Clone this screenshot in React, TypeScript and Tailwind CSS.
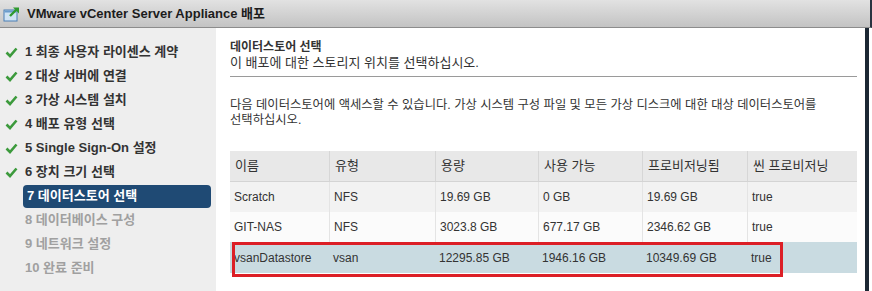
const STEPS = [
  { n: 1, label: "최종 사용자 라이센스 계약", state: "done" },
  { n: 2, label: "대상 서버에 연결", state: "done" },
  { n: 3, label: "가상 시스템 설치", state: "done" },
  { n: 4, label: "배포 유형 선택", state: "done" },
  { n: 5, label: "Single Sign-On 설정", state: "done" },
  { n: 6, label: "장치 크기 선택", state: "done" },
  { n: 7, label: "데이터스토어 선택", state: "current" },
  { n: 8, label: "데이터베이스 구성", state: "todo" },
  { n: 9, label: "네트워크 설정", state: "todo" },
  { n: 10, label: "완료 준비", state: "todo" },
];

const COLUMNS = ["이름", "유형", "용량", "사용 가능", "프로비저닝됨", "씬 프로비저닝"];

const ROWS = [
  ["Scratch", "NFS", "19.69 GB", "0 GB", "19.69 GB", "true"],
  ["GIT-NAS", "NFS", "3023.8 GB", "677.17 GB", "2346.62 GB", "true"],
  ["vsanDatastore", "vsan", "12295.85 GB", "1946.16 GB", "10349.69 GB", "true"],
];

const GRID = "grid grid-cols-[99px_106px_103px_104px_105px_1fr]";

function AppIcon() {
  return (
    <svg width="18" height="16" viewBox="0 0 18 16">
      <rect x="1" y="4" width="13" height="11" fill="#cfe3f4" stroke="#4a7fb5" strokeWidth="1" />
      <rect x="1.5" y="4.5" width="12" height="2" fill="#6a9ccc" />
      <path d="M7 10 L14 3" stroke="#2f9a2f" strokeWidth="2.4" />
      <path d="M10 1.5 H16 V7.5 Z" fill="#2f9a2f" />
    </svg>
  );
}

function Check() {
  return (
    <svg width="13" height="11" viewBox="0 0 13 11">
      <path d="M1.5 5.5 L5 9 L11.5 1.5" fill="none" stroke="#3c9a3c" strokeWidth="2.6" />
    </svg>
  );
}

export default function App() {
  return (
    <div className="flex h-[291px] w-[872px] flex-col overflow-hidden bg-white font-['Liberation_Sans','Noto_Sans_CJK_KR',sans-serif] text-[12px] text-[#333]">
      <div className="flex h-[28px] shrink-0 items-center gap-[6px] border-b border-r-2 border-b-[#8c8c8c] border-r-[#2a3340] bg-gradient-to-b from-[#e2e2e2] to-[#c3c3c3] pl-[3px]">
        <AppIcon />
        <span className="text-[13px] font-bold text-[#1c1c1c]">VMware vCenter Server Appliance 배포</span>
      </div>
      <div className="flex min-h-0 flex-1">
        <div className="w-[216px] shrink-0 bg-[#eeeeee] pt-[12px] text-[13px]">
          {STEPS.map((s) => (
            <div key={s.n} className="flex h-[24px] items-center pl-[5px]">
              <div className="w-[18px] shrink-0">{s.state === "done" && <Check />}</div>
              {s.state === "current" ? (
                <div className="mr-[5px] flex h-[23px] flex-1 items-center rounded-[4px] bg-[#1f4a74] pl-[4px] font-bold text-white">
                  {s.n} {s.label}
                </div>
              ) : (
                <div className={"pl-[2px] font-bold " + (s.state === "todo" ? "text-[#a0a0a0]" : "text-[#333]")}>
                  {s.n} {s.label}
                </div>
              )}
            </div>
          ))}
        </div>
        <div className="flex-1 border-r-4 border-[#1c2733] pl-[14px] pr-[8px] pt-[11px]">
          <div className="font-bold leading-[16px]">데이터스토어 선택</div>
          <div className="text-[13px] leading-[16px]">이 배포에 대한 스토리지 위치를 선택하십시오.</div>
          <div className="mt-[5px] h-px bg-[#9a9a9a]" />
          <p className="mt-[21px] text-[12.3px] leading-[15px]">
            다음 데이터스토어에 액세스할 수 있습니다. 가상 시스템 구성 파일 및 모든 가상 디스크에 대한 대상 데이터스토어를
            <br />
            선택하십시오.
          </p>
          <div className="relative mt-[23px]">
            <div className={GRID + " h-[31px] border-b border-[#d4d4d4] bg-[#e8e8e8] text-[13px]"}>
              {COLUMNS.map((c, i) => (
                <div key={c} className={"flex items-center pl-[5px] " + (i > 0 ? "border-l border-[#d6d6d6]" : "")}>
                  {c}
                </div>
              ))}
            </div>
            {ROWS.map((r, ri) => (
              <div
                key={r[0]}
                className={
                  GRID +
                  " " +
                  (ri === 0 ? "h-[30px] bg-[#f2f2f2]" : ri === 1 ? "h-[30px] bg-[#fbfbfb]" : "h-[31px] bg-[#c9dbe1]")
                }
              >
                {r.map((cell, i) => (
                  <div
                    key={i}
                    className={"flex items-center pl-[4px] " + (i > 0 && ri < 2 ? "border-l border-[#e4e4e4]" : "")}
                  >
                    {cell}
                  </div>
                ))}
              </div>
            ))}
            <div className="absolute left-[2px] top-[91px] h-[35px] w-[551px] border-[3px] border-[#dc1f26]" />
          </div>
        </div>
        <div className="w-[3px] shrink-0 bg-white" />
      </div>
    </div>
  );
}
